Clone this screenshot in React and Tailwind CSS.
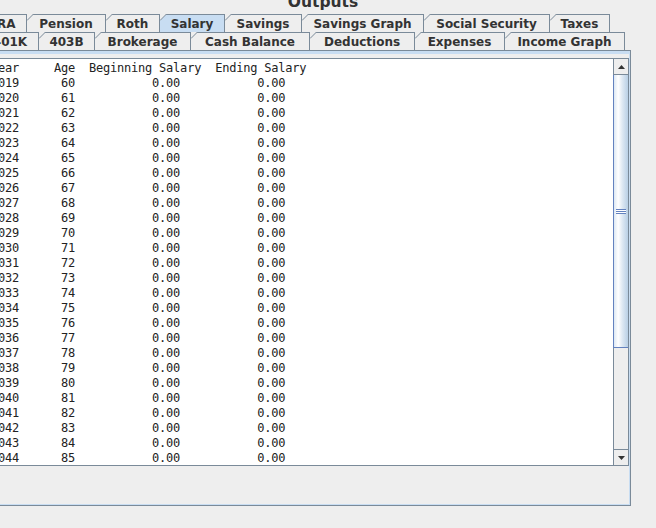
const topRow = [
  { label: "IRA", w: "w-[45px]" },
  { label: "Pension", w: "w-[79px]" },
  { label: "Roth", w: "w-[54px]" },
  { label: "Salary", w: "w-[65px]", selected: true },
  { label: "Savings", w: "w-[77px]" },
  { label: "Savings Graph", w: "w-[122px]" },
  { label: "Social Security", w: "w-[126px]" },
  { label: "Taxes", w: "w-[61px]", last: true },
];

const bottomRow = [
  { label: "401K", w: "w-[57px]" },
  { label: "403B", w: "w-[56px]" },
  { label: "Brokerage", w: "w-[96px]" },
  { label: "Cash Balance", w: "w-[119px]" },
  { label: "Deductions", w: "w-[105px]" },
  { label: "Expenses", w: "w-[90px]" },
  { label: "Income Graph", w: "w-[121px]", last: true },
];

// one line per year, laid out in fixed columns like the Swing text area
const rows = [];
for (let i = 0; i < 36; i++) {
  const year = 2019 + i;
  const age = 60 + i;
  rows.push(`${year}      ${age}           0.00           0.00`);
}

const Tab = ({ tab }) => (
  <div
    className={`relative flex h-[18px] shrink-0 items-center justify-center border-l border-t border-[#7a8a99] ${
      tab.last ? "border-r" : ""
    } ${tab.selected ? "bg-[#c8ddf2]" : "bg-[#eeeeee]"} ${tab.w}`}
  >
    {/* slanted top-left corner of a Metal tab */}
    <svg className="absolute -top-px left-0" width="7" height="7">
      <polygon points="0,0 6.5,0 0,6.5" fill="#eeeeee" />
      <line x1="0" y1="6.5" x2="6.5" y2="0" stroke="#7a8a99" strokeWidth="1" />
    </svg>
    <span className="text-[12px] font-bold text-[#333333]">{tab.label}</span>
  </div>
);

const Arrow = ({ up }) => (
  <svg width="7" height="4">
    <polygon points={up ? "0,4 7,4 3.5,0" : "0,0 7,0 3.5,4"} fill="#333333" />
  </svg>
);

export default function App() {
  return (
    <div className="relative h-[528px] w-[656px] overflow-hidden bg-[#eeeeee] font-['DejaVu_Sans',sans-serif] text-[#333333]">
      <div className="-mt-[8px] flex h-[22px] w-[646px] justify-center text-[15.5px] font-bold leading-[20px]">
        Outputs
      </div>

      <div className="-ml-[19px] flex">
        {topRow.map((t) => (
          <Tab key={t.label} tab={t} />
        ))}
      </div>
      <div className="-ml-[19px] flex">
        {bottomRow.map((t) => (
          <Tab key={t.label} tab={t} />
        ))}
      </div>

      {/* tab content area */}
      <div className="-ml-[21px] flex h-[456px] w-[652px] flex-col border border-[#7a8a99]">
        <div className="flex flex-1 flex-col border-b border-l-2 border-r border-t-[3px] border-[#c8ddf2] pt-[4px]">
          <div className="flex h-[408px] border border-[#7a8a99]">
            <div className="flex-1 overflow-hidden bg-white pl-[8px] pt-[2px] font-['DejaVu_Sans_Mono',monospace] text-[12px] leading-[15px] tracking-[-0.22px] whitespace-pre text-[#222222]">
              <div>Year     Age  Beginning Salary  Ending Salary</div>
              {rows.map((r) => (
                <div key={r}>{r}</div>
              ))}
            </div>

            {/* vertical scrollbar */}
            <div className="flex w-[15px] flex-col">
              <div className="flex h-[16px] items-center justify-center border-b border-l border-[#7a8a99] bg-[#eeeeee] pt-px">
                <Arrow up />
              </div>
              <div className="flex h-[273px] items-center justify-center border-b border-l border-[#6382bf] bg-[linear-gradient(to_right,#dde8f3,#ffffff_30%,#dde8f3_60%,#b8cfe5)]">
                <div className="flex w-[10px] flex-col">
                  <div className="h-px bg-[#6382bf]" />
                  <div className="h-px bg-white" />
                  <div className="h-px bg-[#6382bf]" />
                  <div className="h-px bg-white" />
                  <div className="h-px bg-[#6382bf]" />
                </div>
              </div>
              <div className="flex-1 border-l border-[#7a8a99] bg-[#eeeeee]" />
              <div className="flex h-[16px] items-center justify-center border-l border-t border-[#7a8a99] bg-[#eeeeee]">
                <Arrow />
              </div>
            </div>
          </div>
          <div className="flex-1" />
        </div>
      </div>
    </div>
  );
}
